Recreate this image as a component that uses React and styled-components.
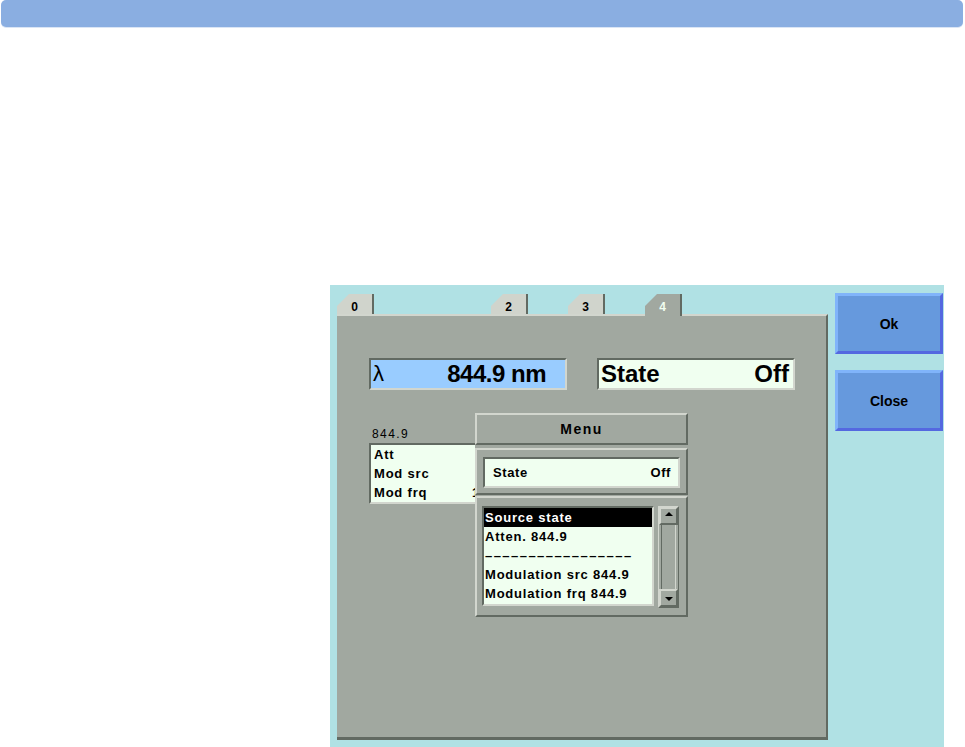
import React from 'react';
import styled, { createGlobalStyle } from 'styled-components';

const dark = '#626a62';
const light = '#d2d6ce';
const panelGray = '#a1a8a0';

const GlobalStyle = createGlobalStyle`
  body {
    margin: 0;
    background: #ffffff;
    font-family: "Liberation Sans", Arial, sans-serif;
  }
`;

const Page = styled.div`
  width: 965px;
  height: 747px;
  overflow: hidden;
`;

const TitleBar = styled.div`
  height: 27px;
  margin: 0 2px 0 1px;
  border-radius: 5px;
  background: #8aaee1;
  box-shadow: 0 1px 0 #dae5f5;
`;

const Workspace = styled.div`
  margin: 258px 21px 0 330px;
  height: 462px;
  box-sizing: border-box;
  padding: 8px 1px 0 7px;
  background: #b0e1e4;
  display: flex;
  gap: 7px;
`;

const TabArea = styled.div`
  width: 491px;
  display: flex;
  flex-direction: column;
`;

const TabRow = styled.div`
  display: flex;
  gap: 40px;
  height: 20px;
  margin-top: 1px;
`;

const Tab = styled.div`
  width: 37px;
  box-sizing: border-box;
  border-right: 2px solid ${dark};
  clip-path: polygon(12px 0, 100% 0, 100% 100%, 0 100%, 0 12px);
  background: ${p => (p.$active ? panelGray : '#d0d4cc')};
  color: ${p => (p.$active ? '#f0fff0' : '#000000')};
  visibility: ${p => (p.$hidden ? 'hidden' : 'visible')};
  position: relative;
  z-index: 1;
  height: ${p => (p.$active ? '22px' : '20px')};
  margin-bottom: ${p => (p.$active ? '-2px' : '0')};
  display: flex;
  align-items: flex-start;
  justify-content: center;
  padding-top: 7px;
  font-size: 12px;
  font-weight: bold;
  line-height: 12px;
`;

const Panel = styled.div`
  position: relative;
  height: 426px;
  box-sizing: border-box;
  background: ${panelGray};
  border-top: 2px solid ${light};
  border-right: 2px solid ${dark};
  border-bottom: 3px solid ${dark};
  padding: 42px 0 0 32px;
`;

const FieldRow = styled.div`
  display: flex;
  gap: 30px;
`;

const BigField = styled.div`
  width: 198px;
  height: 32px;
  box-sizing: border-box;
  border: 2px solid;
  border-color: ${dark} ${light} ${light} ${dark};
  background: ${p => p.$bg};
  display: flex;
  align-items: center;
  justify-content: space-between;
  padding: 0 ${p => p.$padRight}px 0 2px;
  font-size: 24px;
  font-weight: bold;
  color: #000000;
  line-height: 28px;
`;

const Lambda = styled.span`
  font-weight: normal;
  font-size: 22px;
`;

const Reading = styled.span`
  letter-spacing: -0.5px;
`;

const SmallLabel = styled.div`
  margin-top: 38px;
  height: 15px;
  padding-left: 3px;
  font-size: 12px;
  letter-spacing: 1.4px;
  line-height: 13px;
  color: #000000;
`;

const ParamBox = styled.div`
  width: 198px;
  box-sizing: border-box;
  border: 2px solid;
  border-color: ${dark} ${light} ${light} ${dark};
  background: #f0fff0;
`;

const ParamRow = styled.div`
  display: grid;
  grid-template-columns: 98px 1fr;
  height: 19px;
  align-items: center;
  padding-left: 3px;
  font-size: 13px;
  font-weight: bold;
  letter-spacing: 0.8px;
  color: #000000;
`;

const ParamValue = styled.span`
  white-space: nowrap;
`;

const Menu = styled.div`
  position: absolute;
  left: 138px;
  top: 97px;
  width: 213px;
  z-index: 2;
  background: ${panelGray};
`;

const Raised = styled.div`
  box-sizing: border-box;
  border: 2px solid;
  border-color: ${light} ${dark} ${dark} ${light};
  background: ${panelGray};
`;

const MenuHeader = styled(Raised)`
  height: 32px;
  display: flex;
  align-items: center;
  justify-content: center;
  font-size: 14px;
  font-weight: bold;
  letter-spacing: 1.5px;
  color: #000000;
`;

const MenuStateSection = styled(Raised)`
  margin-top: 3px;
  height: 47px;
  padding: 7px 6px 0 6px;
`;

const StateField = styled.div`
  height: 31px;
  box-sizing: border-box;
  border: 2px solid;
  border-color: ${dark} ${light} ${light} ${dark};
  background: #f0fff0;
  display: flex;
  align-items: center;
  justify-content: space-between;
  padding: 0 7px 0 8px;
  font-size: 13px;
  font-weight: bold;
  letter-spacing: 0.6px;
  color: #000000;
`;

const MenuListSection = styled(Raised)`
  margin-top: 1px;
  height: 121px;
  padding: 8px 0 0 5px;
  display: flex;
  align-items: flex-start;
  gap: 4px;
`;

const ListFrame = styled.div`
  width: 172px;
  height: 100px;
  box-sizing: border-box;
  border: 2px solid;
  border-color: ${dark} ${light} ${light} ${dark};
  background: #f0fff0;
  overflow: hidden;
`;

const ListItem = styled.div`
  height: 19px;
  line-height: 19px;
  padding-left: 1px;
  font-size: 13px;
  font-weight: bold;
  letter-spacing: ${p => (p.$dashes ? '1.45px' : '0.8px')};
  white-space: nowrap;
  background: ${p => (p.$selected ? '#000000' : 'transparent')};
  color: ${p => (p.$selected ? '#ffffff' : '#000000')};
`;

const ScrollBar = styled.div`
  width: 21px;
  height: 102px;
  box-sizing: border-box;
  border: 1px solid;
  border-color: ${light} ${dark} ${dark} ${light};
  display: flex;
  flex-direction: column;
  background: ${panelGray};
`;

const ScrollButton = styled.div`
  height: 18px;
  box-sizing: border-box;
  border: 2px solid;
  border-color: ${light} ${dark} ${dark} ${light};
  display: flex;
  justify-content: center;
  align-items: ${p => (p.$down ? 'flex-end' : 'flex-start')};
  padding: ${p => (p.$down ? '0 0 4px' : '3px 0 0')};

  &::after {
    content: '';
    width: 0;
    height: 0;
    border-left: 4px solid transparent;
    border-right: 4px solid transparent;
    ${p => (p.$down ? 'border-top: 4px solid #000000;' : 'border-bottom: 4px solid #000000;')}
  }
`;

const ScrollTrack = styled.div`
  flex: 1;
  margin: 0 2px;
  border-left: 1px solid ${dark};
  border-right: 1px solid ${light};
`;

const ButtonColumn = styled.div`
  display: flex;
  flex-direction: column;
  gap: 16px;
`;

const ActionButton = styled.button`
  width: 108px;
  height: 61px;
  box-sizing: border-box;
  border: 3px solid;
  border-color: #80b4fa #5468e0 #5468e0 #80b4fa;
  background: #6699dd;
  font-family: "Liberation Sans", Arial, sans-serif;
  font-size: 14px;
  font-weight: bold;
  color: #000000;
  padding: 0;
  cursor: pointer;
`;

const tabs = [
  { label: '0' },
  { label: '1', hidden: true },
  { label: '2' },
  { label: '3' },
  { label: '4', active: true },
];

const params = [
  { name: 'Att', value: '' },
  { name: 'Mod src', value: '' },
  { name: 'Mod frq', value: '1' },
];

const menuItems = [
  'Source state',
  'Atten. 844.9',
  '–––––––––––––––––',
  'Modulation src 844.9',
  'Modulation frq 844.9',
];

const App = () => {
  return (
    <Page>
      <GlobalStyle />
      <TitleBar />
      <Workspace>
        <TabArea>
          <TabRow>
            {tabs.map(t => (
              <Tab key={t.label} $active={t.active} $hidden={t.hidden}>{t.label}</Tab>
            ))}
          </TabRow>
          <Panel>
            <FieldRow>
              <BigField $bg="#99ccff" $padRight={19}>
                <Lambda>λ</Lambda>
                <Reading>844.9 nm</Reading>
              </BigField>
              <BigField $bg="#f0fff0" $padRight={4}>
                <span>State</span>
                <span>Off</span>
              </BigField>
            </FieldRow>

            <SmallLabel>844.9</SmallLabel>
            <ParamBox>
              {params.map(p => (
                <ParamRow key={p.name}>
                  <span>{p.name}</span>
                  <ParamValue>{p.value}</ParamValue>
                </ParamRow>
              ))}
            </ParamBox>

            <Menu>
              <MenuHeader>Menu</MenuHeader>
              <MenuStateSection>
                <StateField>
                  <span>State</span>
                  <span>Off</span>
                </StateField>
              </MenuStateSection>
              <MenuListSection>
                <ListFrame>
                  {menuItems.map((item, i) => (
                    <ListItem key={i} $selected={i === 0} $dashes={i === 2}>{item}</ListItem>
                  ))}
                </ListFrame>
                <ScrollBar>
                  <ScrollButton />
                  <ScrollTrack />
                  <ScrollButton $down />
                </ScrollBar>
              </MenuListSection>
            </Menu>
          </Panel>
        </TabArea>
        <ButtonColumn>
          <ActionButton>Ok</ActionButton>
          <ActionButton>Close</ActionButton>
        </ButtonColumn>
      </Workspace>
    </Page>
  );
};

export default App;
